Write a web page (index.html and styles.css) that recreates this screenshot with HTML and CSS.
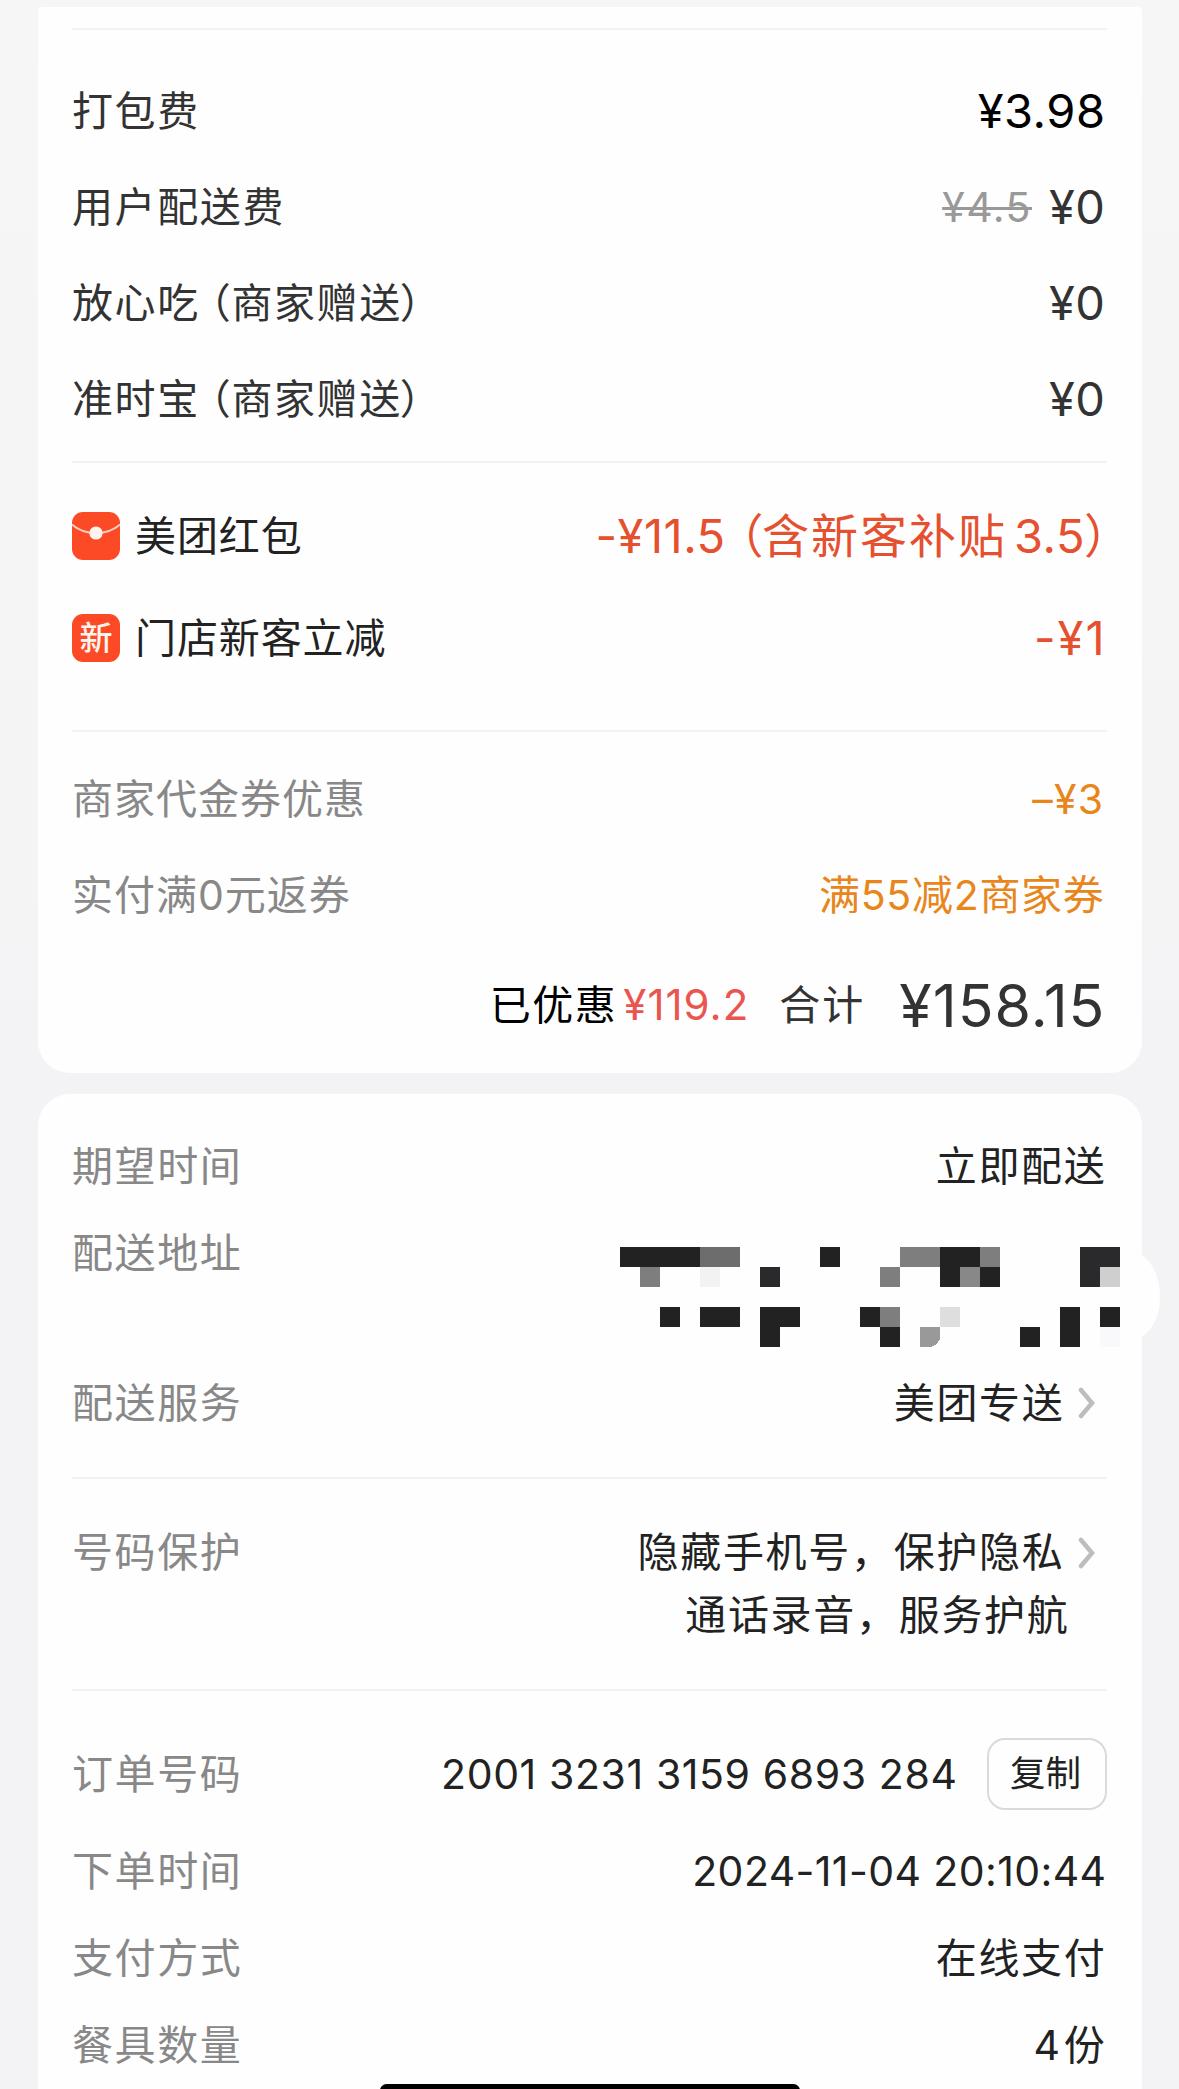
FILE: index.html
```html
<!DOCTYPE html>
<html lang="zh-CN">
<head>
<meta charset="utf-8">
<title>订单详情</title>
<link rel="stylesheet" href="styles.css">
</head>
<body>
<main class="page">
  <section class="card card-fees">
    <hr class="divider">
    <div class="group fees">
      <div class="row"><span class="label dark">打包费</span><span class="price black">¥3.98</span></div>
      <div class="row"><span class="label dark">用户配送费</span><span class="pair"><s class="old">¥4.5</s><span class="price zero">¥0</span></span></div>
      <div class="row"><span class="label dark">放心吃<span class="open">（</span>商家赠送<span class="close">）</span></span><span class="price zero">¥0</span></div>
      <div class="row"><span class="label dark">准时宝<span class="open">（</span>商家赠送<span class="close">）</span></span><span class="price zero">¥0</span></div>
    </div>
    <hr class="divider">
    <div class="group discounts">
      <div class="row">
        <span class="tagged">
          <svg class="tag" viewBox="0 0 48 48"><rect width="48" height="48" rx="11" fill="#fc4a26"/><path d="M0 12.5Q9 21 24 21T48 12.5" fill="none" stroke="#ffd0c0" stroke-width="2"/><circle cx="24" cy="21" r="6.6" fill="#fff4ec"/></svg>
          <span class="label ink">美团红包</span>
        </span>
        <span class="price red subsidy">-¥11.5<span class="open">（</span><span class="cjk">含新客补贴</span><span class="amount">3.5</span><span class="close">）</span></span>
      </div>
      <div class="row">
        <span class="tagged"><span class="tag tag-new">新</span><span class="label ink">门店新客立减</span></span>
        <span class="price red minus-one">-¥1</span>
      </div>
    </div>
    <hr class="divider">
    <div class="group vouchers">
      <div class="row"><span class="label">商家代金券优惠</span><span class="value orange voucher">–¥3</span></div>
      <div class="row"><span class="label">实付满0元返券</span><span class="value orange coupon">满55减2商家券</span></div>
    </div>
    <div class="total">
      <span class="saved">已优惠</span><span class="saved-amount">¥119.2</span><span class="sum">合计</span><span class="sum-amount">¥158.15</span>
    </div>
  </section>

  <section class="card card-info">
    <div class="group delivery">
      <div class="row"><span class="label">期望时间</span><span class="value cn">立即配送</span></div>
      <div class="row address">
        <span class="label">配送地址</span>
        <svg class="mosaic" viewBox="0 0 540 100" shape-rendering="crispEdges">
          <path d="M480 0H510Q540 14 540 50T508 97L480 100Z" fill="#fefefe" shape-rendering="auto"/>
          <path d="M0 0h80v20H0zM200 0h20v20h-20zM320 0h40v20h-20v20h-20zM360 20h20v20h-20zM40 60h20v20H40zM80 60h40v20H80zM140 60h40v20h-20v20h-20zM240 60h20v20h-20zM260 80h20v20h-20zM400 80h20v20h-20zM440 60h20v40h-20zM480 60h20v20h-20z" fill="#222"/>
          <path d="M460 0h40v20h-20v20h-20zM140 20h20v20h-20z" fill="#2a2a2c"/>
          <path d="M80 0h40v20H80z" fill="#6d6d6d"/>
          <path d="M280 0h40v20h-40zM360 0h20v20h-20zM20 20h20v20H20zM260 20h20v20h-20zM260 60h20v20h-20z" fill="#7e7e7e"/>
          <path d="M340 20h20v20h-20z" fill="#888"/>
          <path d="M300 80h20v12q-3 6-9 8h-11z" fill="#999"/>
          <path d="M480 20h20v20h-20z" fill="#cfcfd0"/>
          <path d="M320 60h20v20h-20z" fill="#dedede"/>
          <path d="M80 20h20v20H80z" fill="#f2f2f2"/>
          <path d="M480 80h20v20h-20z" fill="#f9f9fb"/>
        </svg>
      </div>
      <div class="row">
        <span class="label">配送服务</span>
        <span class="link"><span class="value cn">美团专送</span><svg class="chevron" viewBox="0 0 18 32"><path d="M3 3L14 16L3 29"/></svg></span>
      </div>
    </div>
    <hr class="divider">
    <div class="group privacy">
      <span class="label">号码保护</span>
      <div class="lines">
        <span class="link"><span class="value cn">隐藏手机号，保护隐私</span><svg class="chevron" viewBox="0 0 18 32"><path d="M3 3L14 16L3 29"/></svg></span>
        <span class="value cn second">通话录音，服务护航</span>
      </div>
    </div>
    <hr class="divider">
    <div class="group order">
      <div class="row number"><span class="label">订单号码</span><span class="pair"><span class="value order-no">2001 3231 3159 6893 284</span><button class="copy" type="button">复制</button></span></div>
      <div class="row time"><span class="label">下单时间</span><span class="value datetime">2024-11-04 20:10:44</span></div>
      <div class="row pay"><span class="label">支付方式</span><span class="value cn">在线支付</span></div>
      <div class="row ware"><span class="label">餐具数量</span><span class="value cn"><span class="count">4</span>份</span></div>
    </div>
  </section>
  <div class="home-bar"></div>
</main>
</body>
</html>
```
FILE: styles.css
```css
* { box-sizing: border-box; }

html { overflow: hidden; }

body {
  margin: 0;
  background: #f3f3f5;
  font-family: Inter, "Noto Sans CJK SC", sans-serif;
  font-size: 41px;
  line-height: 1;
  color: #222;
}

.page {
  position: relative;
  height: 2089px;
  overflow: hidden;
  padding: 7px 37.5px 0;
  background: linear-gradient(#f6f6f6, #f4f4f5 900px, #f3f3f6 1100px);
}

.card {
  background: #fefefe;
  padding: 0 35px 0 34.5px;
}

.card-fees {
  height: 1066px;
  padding-top: 21px;
  border-radius: 4px 4px 32px 32px;
}

.card-info {
  height: 1010px;
  margin-top: 21px;
  padding-top: 28px;
  border-radius: 32px 32px 0 0;
}

.divider {
  height: 2px;
  margin: 0;
  border: 0;
  background: #f2f2f2;
}

.row {
  display: flex;
  align-items: center;
  justify-content: space-between;
  padding-right: 1px;
  white-space: nowrap;
}

.fees { padding: 33px 0 14px; }
.fees .row { height: 96px; }

.discounts { padding: 22px 0 41px; }
.discounts .row { height: 102px; }

.vouchers { padding-top: 19px; }
.vouchers .row { height: 96px; padding-right: 2px; }
.vouchers .label { letter-spacing: 1px; }

.label { color: #888; letter-spacing: 1.6px; }
.label.dark { color: #333; }
.label.ink { color: #222; letter-spacing: 0.9px; }

.open { margin: 0 -1px 0 -10px; }
.close { margin-left: -2px; }

.pair, .link, .tagged { display: flex; align-items: center; }

.price { padding-bottom: 2px; font-size: 47px; letter-spacing: 0.5px; }
.price.black { color: #000; }
.price.zero { color: #333; }
.price.red { color: #e5502f; }

.subsidy { margin-right: -26px; }
.subsidy .open { margin: 0 -2px 0 -9px; }
.subsidy .cjk { letter-spacing: 2px; }
.subsidy .amount { margin-left: 7px; }
.subsidy .close { margin-left: -1px; }

.minus-one { margin-right: -1px; letter-spacing: 2px; }

.old {
  margin-right: 17px;
  font-size: 41px;
  letter-spacing: 1.5px;
  color: #999;
  text-decoration-thickness: 3px;
}

.tag { width: 48px; height: 48px; margin-right: 15px; flex: none; }

.tag-new {
  display: grid;
  place-items: center;
  border-radius: 11px;
  background: #fc4a26;
  color: #fff4ec;
  font-size: 33px;
  font-weight: 500;
}

.orange { color: #e8861c; }
.voucher { letter-spacing: 1.3px; }
.coupon { letter-spacing: 0.7px; }

.total {
  display: flex;
  align-items: center;
  justify-content: flex-end;
  height: 124px;
  padding-right: 1px;
}

.saved { margin-right: 6px; color: #000; letter-spacing: 1.5px; }
.saved-amount { margin-right: 30px; color: #ea5550; font-size: 42px; letter-spacing: 1px; }
.sum { margin-right: 34px; color: #333; letter-spacing: 2px; }
.sum-amount { color: #333; font-size: 59px; letter-spacing: 1px; }

.delivery { padding-bottom: 30px; }
.delivery .row { height: 88px; padding-right: 0; }
.delivery .address { height: 149px; align-items: flex-start; }
.address .label { line-height: 86px; }

.mosaic {
  flex: none;
  width: 540px;
  height: 100px;
  margin: 37px -53.5px 0 0;
}

.value.cn { letter-spacing: 1.7px; }

.chevron {
  width: 18px;
  height: 32px;
  margin: 0 11px 0 13px;
  fill: none;
  stroke: #bdbdbd;
  stroke-width: 4.5;
  stroke-linecap: round;
}

.privacy {
  display: flex;
  justify-content: space-between;
  padding: 42px 0 42px 0;
  white-space: nowrap;
  line-height: 63px;
}

.lines { display: flex; flex-direction: column; align-items: flex-end; }
.second { margin-right: 37px; }

.order { padding-top: 33px; }
.order .row { padding-right: 0; }
.number { height: 100px; }
.time { height: 94px; }
.pay { height: 80px; }
.ware { height: 94px; }
.order-no { letter-spacing: 0.6px; }
.datetime { letter-spacing: 0.4px; }
.count { margin-right: 2px; }

.copy {
  width: 120px;
  height: 72px;
  margin-left: 29px;
  padding: 0 2px 0 0;
  border: 2px solid #dadada;
  border-radius: 18px;
  background: #fefefe;
  color: #222;
  font: inherit;
  font-size: 35.5px;
}

.home-bar {
  position: absolute;
  left: 380px;
  bottom: -8px;
  width: 420px;
  height: 13px;
  border-radius: 7px;
  background: #000;
}
```
